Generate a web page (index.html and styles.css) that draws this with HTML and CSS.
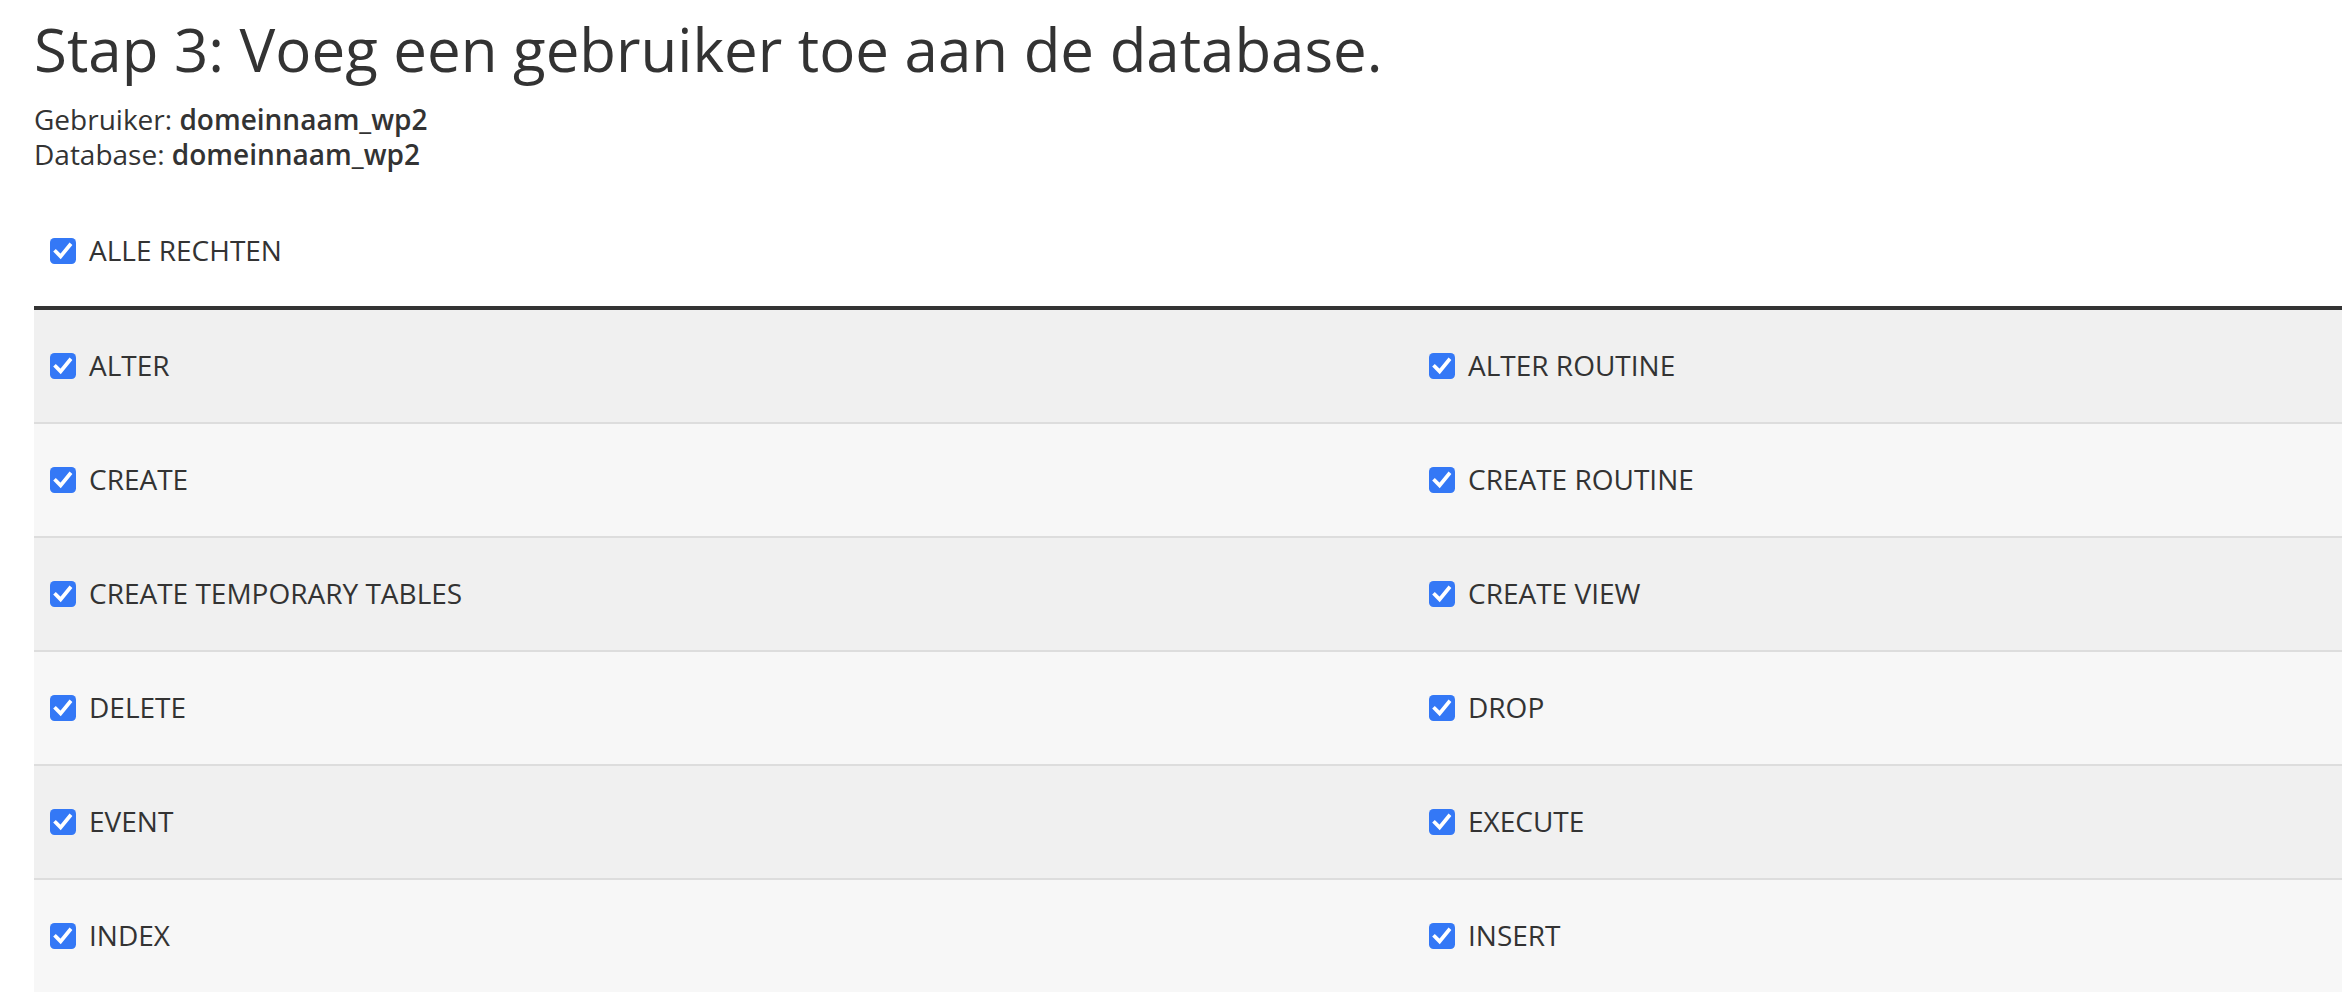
FILE: index.html
```html
<!DOCTYPE html>
<html lang="nl">
<head>
<meta charset="utf-8">
<title>Stap 3</title>
<link rel="stylesheet" href="styles.css">
</head>
<body>
<h1 class="title">Stap 3: Voeg een gebruiker toe aan de database.</h1>
<div class="info">
  <div>Gebruiker: <strong>domeinnaam_wp2</strong></div>
  <div>Database: <strong>domeinnaam_wp2</strong></div>
</div>
<label class="all">
  <span class="cb"><svg viewBox="0 0 26 26" width="26" height="26"><rect x="0" y="0" width="26" height="26" rx="4.5" fill="#3478f6"/><path d="M5.8 13.6 L10.6 18.4 L19.8 7.2" fill="none" stroke="#fff" stroke-width="3.7" stroke-linecap="square"/></svg></span>
  <span class="lbl">ALLE RECHTEN</span>
</label>
<div class="table">
  <div class="row odd">
    <label class="cell"><span class="cb"><svg viewBox="0 0 26 26" width="26" height="26"><rect width="26" height="26" rx="4.5" fill="#3478f6"/><path d="M5.8 13.6 L10.6 18.4 L19.8 7.2" fill="none" stroke="#fff" stroke-width="3.7" stroke-linecap="square"/></svg></span><span class="lbl">ALTER</span></label>
    <label class="cell"><span class="cb"><svg viewBox="0 0 26 26" width="26" height="26"><rect width="26" height="26" rx="4.5" fill="#3478f6"/><path d="M5.8 13.6 L10.6 18.4 L19.8 7.2" fill="none" stroke="#fff" stroke-width="3.7" stroke-linecap="square"/></svg></span><span class="lbl">ALTER ROUTINE</span></label>
  </div>
  <div class="row even">
    <label class="cell"><span class="cb"><svg viewBox="0 0 26 26" width="26" height="26"><rect width="26" height="26" rx="4.5" fill="#3478f6"/><path d="M5.8 13.6 L10.6 18.4 L19.8 7.2" fill="none" stroke="#fff" stroke-width="3.7" stroke-linecap="square"/></svg></span><span class="lbl">CREATE</span></label>
    <label class="cell"><span class="cb"><svg viewBox="0 0 26 26" width="26" height="26"><rect width="26" height="26" rx="4.5" fill="#3478f6"/><path d="M5.8 13.6 L10.6 18.4 L19.8 7.2" fill="none" stroke="#fff" stroke-width="3.7" stroke-linecap="square"/></svg></span><span class="lbl">CREATE ROUTINE</span></label>
  </div>
  <div class="row odd">
    <label class="cell"><span class="cb"><svg viewBox="0 0 26 26" width="26" height="26"><rect width="26" height="26" rx="4.5" fill="#3478f6"/><path d="M5.8 13.6 L10.6 18.4 L19.8 7.2" fill="none" stroke="#fff" stroke-width="3.7" stroke-linecap="square"/></svg></span><span class="lbl">CREATE TEMPORARY TABLES</span></label>
    <label class="cell"><span class="cb"><svg viewBox="0 0 26 26" width="26" height="26"><rect width="26" height="26" rx="4.5" fill="#3478f6"/><path d="M5.8 13.6 L10.6 18.4 L19.8 7.2" fill="none" stroke="#fff" stroke-width="3.7" stroke-linecap="square"/></svg></span><span class="lbl">CREATE VIEW</span></label>
  </div>
  <div class="row even">
    <label class="cell"><span class="cb"><svg viewBox="0 0 26 26" width="26" height="26"><rect width="26" height="26" rx="4.5" fill="#3478f6"/><path d="M5.8 13.6 L10.6 18.4 L19.8 7.2" fill="none" stroke="#fff" stroke-width="3.7" stroke-linecap="square"/></svg></span><span class="lbl">DELETE</span></label>
    <label class="cell"><span class="cb"><svg viewBox="0 0 26 26" width="26" height="26"><rect width="26" height="26" rx="4.5" fill="#3478f6"/><path d="M5.8 13.6 L10.6 18.4 L19.8 7.2" fill="none" stroke="#fff" stroke-width="3.7" stroke-linecap="square"/></svg></span><span class="lbl">DROP</span></label>
  </div>
  <div class="row odd">
    <label class="cell"><span class="cb"><svg viewBox="0 0 26 26" width="26" height="26"><rect width="26" height="26" rx="4.5" fill="#3478f6"/><path d="M5.8 13.6 L10.6 18.4 L19.8 7.2" fill="none" stroke="#fff" stroke-width="3.7" stroke-linecap="square"/></svg></span><span class="lbl">EVENT</span></label>
    <label class="cell"><span class="cb"><svg viewBox="0 0 26 26" width="26" height="26"><rect width="26" height="26" rx="4.5" fill="#3478f6"/><path d="M5.8 13.6 L10.6 18.4 L19.8 7.2" fill="none" stroke="#fff" stroke-width="3.7" stroke-linecap="square"/></svg></span><span class="lbl">EXECUTE</span></label>
  </div>
  <div class="row even">
    <label class="cell"><span class="cb"><svg viewBox="0 0 26 26" width="26" height="26"><rect width="26" height="26" rx="4.5" fill="#3478f6"/><path d="M5.8 13.6 L10.6 18.4 L19.8 7.2" fill="none" stroke="#fff" stroke-width="3.7" stroke-linecap="square"/></svg></span><span class="lbl">INDEX</span></label>
    <label class="cell"><span class="cb"><svg viewBox="0 0 26 26" width="26" height="26"><rect width="26" height="26" rx="4.5" fill="#3478f6"/><path d="M5.8 13.6 L10.6 18.4 L19.8 7.2" fill="none" stroke="#fff" stroke-width="3.7" stroke-linecap="square"/></svg></span><span class="lbl">INSERT</span></label>
  </div>
</div>
</body>
</html>
```
FILE: styles.css
```css
html {
  overflow: hidden;
}
body {
  margin: 0;
  padding: 12px 0 0 34px;
  background: #ffffff;
  color: #333333;
  font-family: "Open Sans", "Noto Sans", sans-serif;
}
.title {
  margin: 0 0 16px 0;
  font-size: 60px;
  line-height: 74px;
  font-weight: 400;
  color: #333333;
}
.info {
  font-size: 28px;
  line-height: 35px;
}
.info strong {
  font-weight: 600;
}
.all {
  display: flex;
  align-items: center;
  height: 40px;
  margin: 59px 0 35px 0;
  padding-left: 16px;
}
.cb {
  display: flex;
  width: 26px;
  height: 26px;
  flex: none;
}
.lbl {
  margin-left: 13px;
  font-size: 28px;
  line-height: 40px;
  padding-bottom: 2px;
}
.table {
  border-top: 4px solid #333333;
}
.row {
  display: grid;
  grid-template-columns: 1379px 1fr;
  height: 112px;
  border-bottom: 2px solid #dddddd;
}
.row.odd {
  background: #f0f0f0;
}
.row.even {
  background: #f7f7f7;
}
.cell {
  display: flex;
  align-items: center;
  padding-left: 16px;
}
```
